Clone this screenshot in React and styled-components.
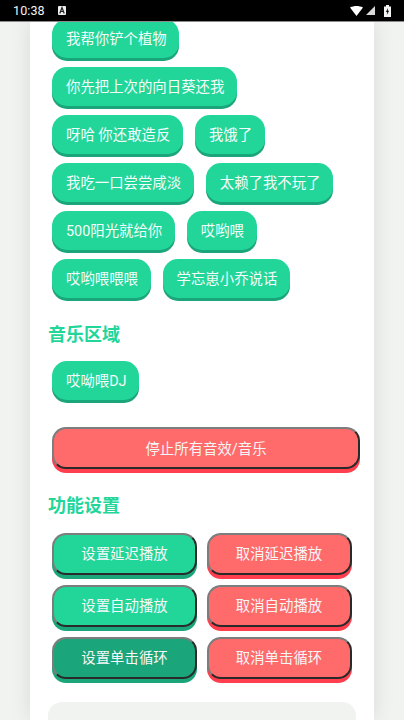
import React from 'react';
import styled, { createGlobalStyle } from 'styled-components';

const Global = createGlobalStyle`
  html, body { margin: 0; padding: 0; background: #f1f3f0; }
  * { box-sizing: border-box; }
  body { font-family: "Roboto", "Noto Sans CJK SC", sans-serif; }
`;
const Screen = styled.div`
  width: 404px; height: 720px; overflow: hidden; display: flex; flex-direction: column; background: #f1f3f0;
`;
const StatusBar = styled.div`
  height: 22px; flex: none; background: #000; border-bottom: 1px solid #8a8a8a; display: flex; align-items: center;
  padding: 0 13px 0 13px; color: #f4f4f4; font: 400 12.5px "Roboto", sans-serif; position: relative; z-index: 2;
`;
const Time = styled.span`letter-spacing: 0.1px; margin-right: 13px;`;
const StatusIcons = styled.div`margin-left: auto; display: flex; align-items: center; gap: 3px;`;
const Main = styled.div`flex: 1; min-height: 0; padding: 0 30px; overflow: hidden; display: flex;`;
const Card = styled.div`
  flex: 1; min-width: 0; background: #fff; padding: 0 18px; box-shadow: 0 0 20px rgba(0,0,0,.1);
  display: flex; flex-direction: column;
`;
const Chips = styled.div`
  flex: none; display: flex; flex-wrap: wrap; padding: 0 4px 3px; gap: 9px 12px; margin-top: ${p => p.$top || 0}px;
`;
const Chip = styled.button`
  height: 39px; border: 0; border-radius: 15px; padding: 0 12.6px 2px 14px; background: #22d69a; color: #f4fbf8;
  box-shadow: 0 3px 0 #1ba57a; font: 400 14.4px "Roboto", "Noto Sans CJK SC", sans-serif; white-space: nowrap;
`;
const Title = styled.h3`
  flex: none; margin: ${p => p.$m}; color: #22d69a; font: 700 18px/24px "Roboto", "Noto Sans CJK SC", sans-serif;
`;
const Btn = styled.button`
  height: 42px; border-radius: 14px; padding: 0 0 2px; border: 2px solid; border-color: #7d7d7d #2a2a2a #2a2a2a #7d7d7d;
  color: #f6f6f6; font: 400 14.4px "Roboto", "Noto Sans CJK SC", sans-serif; white-space: nowrap;
  background: ${p => p.$bg}; box-shadow: 0 4px 0 ${p => p.$shade};
`;
const StopRow = styled.div`flex: none; padding: 0 4px; margin-top: 24px; display: flex;`;
const Stop = styled(Btn)`flex: none; width: 308px;`;
const Grid = styled.div`
  flex: none; display: grid; grid-template-columns: 145px 145px; column-gap: 9.5px; row-gap: 10px; padding: 0 4px;
`;
const Box = styled.div`
  flex: none; height: 60px; margin-top: 23px; padding: 17px 18px; background: #f1f3f0; border-radius: 14px 14px 0 0;
`;
const BoxTitle = styled.div`color: #22d69a; font: 700 16px/20px "Roboto", "Noto Sans CJK SC", sans-serif;`;

const G = ['#22d69a', '#1ba57a'];
const R = ['#ff6b6b', '#ff3f4e'];

export default function App() {
  return (
    <Screen>
      <Global />
      <StatusBar>
        <Time>10:38</Time>
        <svg width="8" height="9" viewBox="0 0 8 9"><rect width="8" height="9" rx="1" fill="#eee"/><path d="M1.8 7.5 4 1.5 6.2 7.5M2.8 5.5h2.4" stroke="#222" strokeWidth="1.2" fill="none"/></svg>
        <StatusIcons>
          <svg width="13" height="10" viewBox="0 0 13 10"><path d="M0 1.5C4-.5 9-.5 13 1.5L6.5 10Z" fill="#fff"/></svg>
          <svg width="9" height="9" viewBox="0 0 9 9"><path d="M9 0V9H0Z" fill="#fff" opacity=".85"/></svg>
          <svg width="7" height="12" viewBox="0 0 7 12" style={{ marginLeft: 6 }}><path d="M0 1.5h2V0h3v1.5h2V12H0Z" fill="#f4f4f4"/><path d="M4 3 1.8 7H3.2L2.8 10 5.2 5.8H3.8Z" fill="#111"/></svg>
        </StatusIcons>
      </StatusBar>
      <Main>
        <Card>
          <Chips $top={-3}>
            <Chip>我帮你铲个植物</Chip>
            <Chip>你先把上次的向日葵还我</Chip>
            <Chip>呀哈 你还敢造反</Chip>
            <Chip>我饿了</Chip>
            <Chip>我吃一口尝尝咸淡</Chip>
            <Chip>太赖了我不玩了</Chip>
            <Chip>500阳光就给你</Chip>
            <Chip>哎哟喂</Chip>
            <Chip>哎哟喂喂喂</Chip>
            <Chip>学忘崽小乔说话</Chip>
          </Chips>
          <Title $m="22px 0 14px">音乐区域</Title>
          <Chips><Chip>哎呦喂DJ</Chip></Chips>
          <StopRow><Stop $bg={R[0]} $shade={R[1]}>停止所有音效/音乐</Stop></StopRow>
          <Title $m="25px 0 14.5px">功能设置</Title>
          <Grid>
            <Btn $bg={G[0]} $shade={G[1]}>设置延迟播放</Btn>
            <Btn $bg={R[0]} $shade={R[1]}>取消延迟播放</Btn>
            <Btn $bg={G[0]} $shade={G[1]}>设置自动播放</Btn>
            <Btn $bg={R[0]} $shade={R[1]}>取消自动播放</Btn>
            <Btn $bg={G[1]} $shade={G[1]}>设置单击循环</Btn>
            <Btn $bg={R[0]} $shade={R[1]}>取消单击循环</Btn>
          </Grid>
          <Box><BoxTitle>使用说明</BoxTitle></Box>
        </Card>
      </Main>
    </Screen>
  );
}
